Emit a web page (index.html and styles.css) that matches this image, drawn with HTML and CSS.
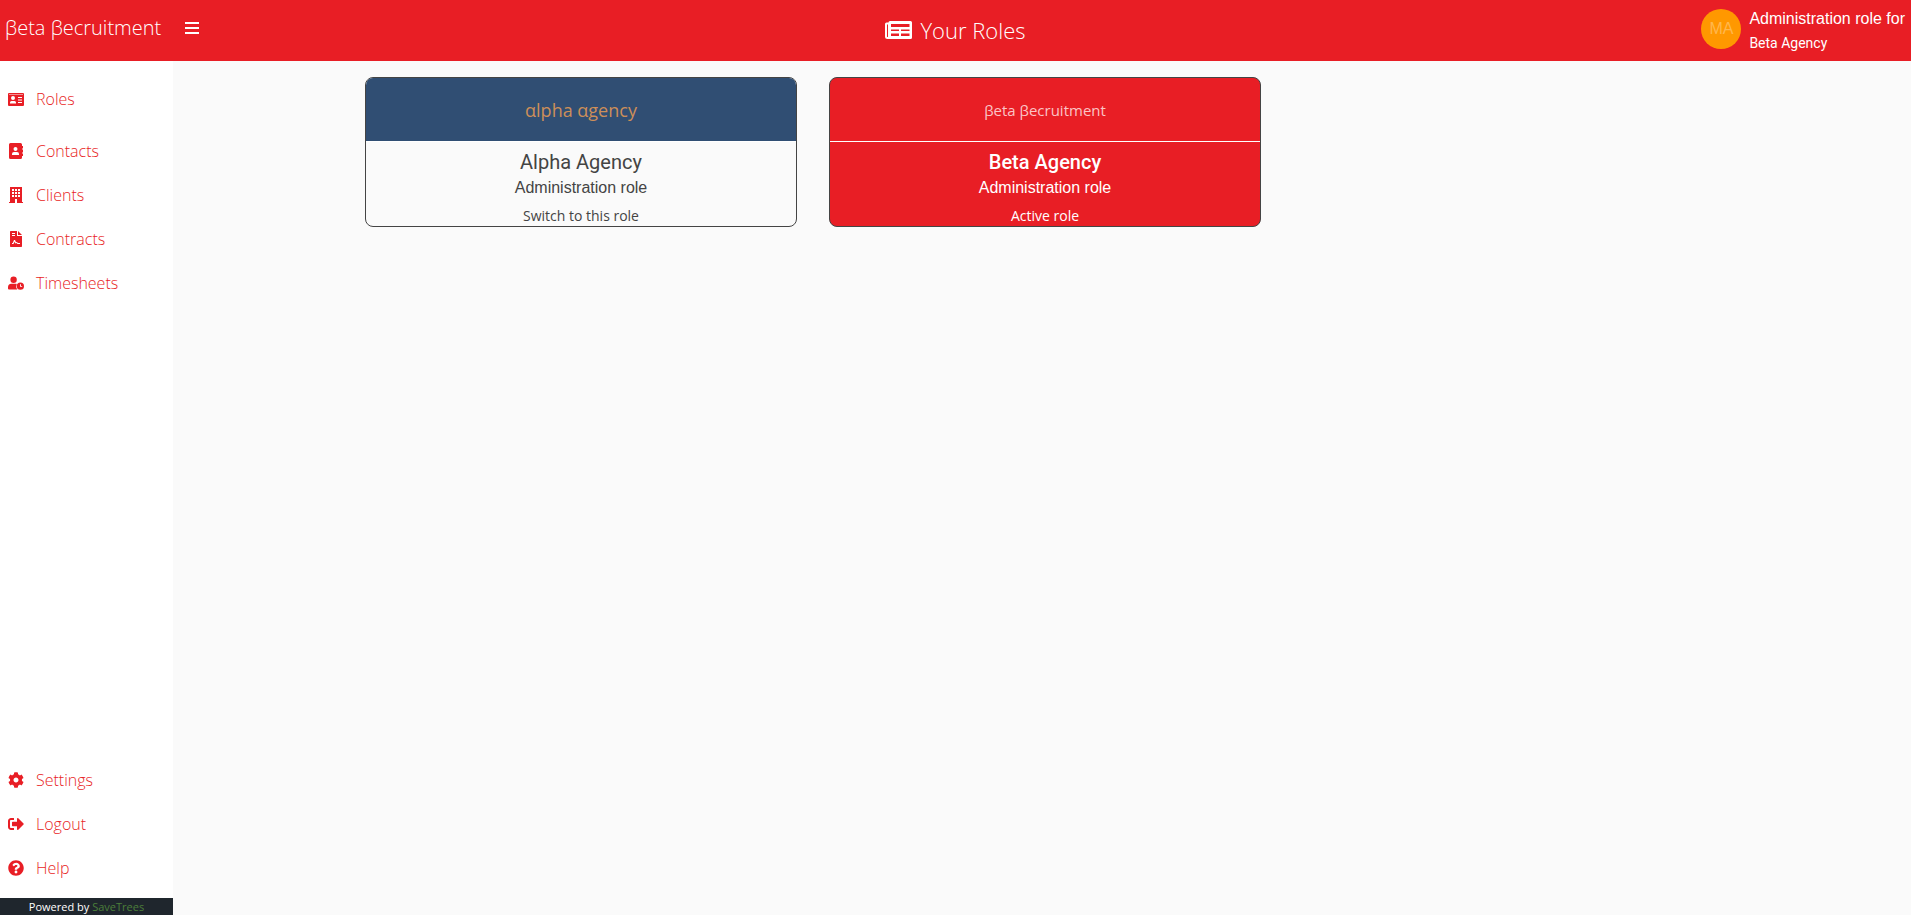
FILE: index.html
```html
<!DOCTYPE html>
<html lang="en">
<head>
    <meta charset="UTF-8">
    <meta name="viewport" content="width=device-width, initial-scale=1.0">
    <title>Your Roles</title>
    <link rel="stylesheet" href="styles.css">
</head>
<body>
    <header class="topbar">
        <div class="topbar-left">
            <a href="#" class="brand">βeta βecruitment</a>
            <button type="button" class="menu-toggle" aria-label="Toggle menu">
                <svg viewBox="0 0 14 14" width="14" height="14" fill="currentColor"><path d="M0 1h14v2H0zM0 6h14v2H0zM0 11h14v2H0z"/></svg>
            </button>
        </div>
        <h1 class="page-title">
            <svg viewBox="0 0 27 18" width="27" height="18" fill="currentColor" fill-rule="evenodd"><path d="M5 0H25.500Q27 0 27 1.500V16.500Q27 18 25.500 18H2.500Q0 18 0 15.500V3Q0 1.500 1.500 1.500H3.500Q3.500 0 5 0zM6 3V6H24.500V3zM6 8.500V10H14V8.500zM16 8.500V10H24.500V8.500zM6 12.500V15H14V12.500zM16 12.500V15H24.500V12.500zM2 3.500V15.500Q2 16 2.500 16Q3 16 3 15.500V3.500z"/></svg>
            <span>Your Roles</span>
        </h1>
        <div class="user">
            <span class="avatar">MA</span>
            <div class="user-info">
                <div class="user-role">Administration role for</div>
                <div class="user-agency">Beta Agency</div>
            </div>
        </div>
    </header>

    <div class="layout">
        <aside class="sidebar">
            <!-- Main menu -->
            <nav class="nav">
                <a href="#" class="nav-link nav-first">
                    <svg class="icon" viewBox="0 0 16 16"><path d="M1 2H15Q16 2 16 3V14Q16 15 15 15H1Q0 15 0 14V3Q0 2 1 2zM5 5A2 2 0 1 0 5 9A2 2 0 1 0 5 5zM2 12.500H8V11.500Q8 10 6.500 10H3.500Q2 10 2 11.500zM10 6V7H14V6zM10 8.500V9.500H14V8.500zM10 11V12H14V11zM1 3V3.600H15V3z"/></svg>
                    <span>Roles</span>
                </a>
                <a href="#" class="nav-link">
                    <svg class="icon" viewBox="0 0 16 16"><path d="M2.500 0H12.500Q14 0 14 1.500V3H15V5.500H14V6.500H15V9.500H14V10.500H15V13H14V14.500Q14 16 12.500 16H2.500Q1 16 1 14.500V1.500Q1 0 2.500 0zM7.500 4A2 2 0 1 0 7.500 8A2 2 0 1 0 7.500 4zM4 12H11V11Q11 9 9 9H6Q4 9 4 11z"/></svg>
                    <span>Contacts</span>
                </a>
                <a href="#" class="nav-link">
                    <svg class="icon" viewBox="0 0 16 16"><path d="M2 0H14V15H15V16H9V12H7V16H1V15H2zM4 2V4H6V2zM7 2V4H9V2zM10 2V4H12V2zM4 5V7H6V5zM7 5V7H9V5zM10 5V7H12V5zM4 8V10H6V8zM7 8V10H9V8zM10 8V10H12V8z"/></svg>
                    <span>Clients</span>
                </a>
                <a href="#" class="nav-link">
                    <svg class="icon" viewBox="0 0 16 16"><path d="M2.700 0H9V5H14V15.300Q14 16 13.300 16H2.700Q2 16 2 15.300V.7Q2 0 2.700 0zM4 2V3H7V2zM4 4V5H7V4zM4 13H5.500L6.500 10.800L7.500 12.500L8.500 12L9.500 13H12V12H10L8.800 11L8 11.300L7 9H6L4.800 12H4z"/><path d="M10 0L14 4H10z"/></svg>
                    <span>Contracts</span>
                </a>
                <a href="#" class="nav-link">
                    <svg class="icon" viewBox="0 0 16 16"><path d="M5.600 1.500A3.200 3.200 0 1 1 5.600 7.900A3.200 3.200 0 1 1 5.600 1.500z"/><path d="M3.400 8.700H8.200Q9 8.700 8.700 9.400Q7.200 12 9.200 14.500H1Q0 14.500 0 13.500V12.200Q0 8.700 3.400 8.700z"/><path d="M12.400 7.600A3.600 3.600 0 1 1 12.400 14.800A3.600 3.600 0 1 1 12.400 7.600zM12 9.200V11.700H14.200V10.900H12.900V9.200z"/></svg>
                    <span>Timesheets</span>
                </a>
            </nav>

            <!-- Account menu -->
            <nav class="nav nav-bottom">
                <a href="#" class="nav-link">
                    <svg class="icon" viewBox="0 0 512 512"><path d="M487.400 315.700l-42.600-24.600c4.300-23.200 4.300-47 0-70.200l42.600-24.600c4.900-2.800 7.100-8.600 5.500-14-11.100-35.600-30-67.800-54.700-94.600-3.800-4.100-10-5.100-14.800-2.300L380.800 110c-17.900-15.400-38.500-27.300-60.800-35.100V25.800c0-5.600-3.900-10.500-9.400-11.700-36.700-8.200-74.300-7.800-109.200 0-5.500 1.200-9.400 6.100-9.400 11.700V75c-22.200 7.900-42.800 19.800-60.800 35.100L88.700 85.500c-4.900-2.800-11-1.900-14.800 2.300-24.700 26.700-43.600 58.900-54.700 94.600-1.700 5.400.6 11.200 5.500 14L67.300 221c-4.300 23.200-4.300 47 0 70.200l-42.600 24.600c-4.900 2.800-7.100 8.600-5.500 14 11.100 35.600 30 67.800 54.700 94.600 3.800 4.100 10 5.100 14.800 2.300l42.600-24.600c17.900 15.400 38.500 27.300 60.800 35.100v49.200c0 5.600 3.900 10.500 9.400 11.700 36.700 8.200 74.300 7.800 109.200 0 5.500-1.200 9.400-6.100 9.400-11.700v-49.200c22.200-7.900 42.800-19.800 60.800-35.100l42.600 24.600c4.900 2.800 11 1.900 14.800-2.300 24.700-26.700 43.600-58.900 54.700-94.600 1.500-5.500-.7-11.300-5.600-14.100zM256 336c-44.100 0-80-35.900-80-80s35.900-80 80-80 80 35.900 80 80-35.900 80-80 80z"/></svg>
                    <span>Settings</span>
                </a>
                <a href="#" class="nav-link">
                    <svg class="icon" viewBox="0 0 512 512"><path d="M497 273L329 441c-15 15-41 4.500-41-17v-96H152c-13.300 0-24-10.700-24-24v-96c0-13.300 10.700-24 24-24h136V88c0-21.400 25.900-32 41-17l168 168c9.300 9.400 9.300 24.600 0 34zM192 436v-40c0-6.600-5.400-12-12-12H96c-17.700 0-32-14.300-32-32V160c0-17.700 14.300-32 32-32h84c6.600 0 12-5.400 12-12V76c0-6.600-5.400-12-12-12H96c-53 0-96 43-96 96v192c0 53 43 96 96 96h84c6.600 0 12-5.400 12-12z"/></svg>
                    <span>Logout</span>
                </a>
                <a href="#" class="nav-link">
                    <svg class="icon" viewBox="0 0 512 512"><path d="M504 256c0 137-111 248-248 248S8 393 8 256C8 119 119 8 256 8s248 111 248 248zM262.700 90c-54.500 0-89.300 23-116.600 63.800-3.500 5.300-2.300 12.400 2.700 16.200l34.700 26.300c5.200 4 12.600 3 16.700-2.100 17.900-22.700 30.100-35.800 57.300-35.800 20.400 0 45.700 13.100 45.700 33 0 15-12.400 22.700-32.500 34C247.100 238.500 216 254.900 216 296v4c0 6.600 5.400 12 12 12h56c6.600 0 12-5.400 12-12v-1.300c0-28.500 83.200-29.700 83.200-106.700 0-58-60.200-102-116.500-102zM256 338c-25.400 0-46 20.600-46 46s20.600 46 46 46 46-20.600 46-46-20.600-46-46-46z"/></svg>
                    <span>Help</span>
                </a>
            </nav>
            <div class="powered">Powered by <a href="#">SaveTrees</a></div>
        </aside>

        <main class="roles">
            <section class="role-card">
                <div class="role-logo logo-alpha">αlpha αgency</div>
                <div class="role-body">
                    <h2>Alpha Agency</h2>
                    <p>Administration role</p>
                    <button type="button" class="role-action">Switch to this role</button>
                </div>
            </section>
            <section class="role-card active">
                <div class="role-logo logo-beta">βeta βecruitment</div>
                <div class="role-body">
                    <h2>Beta Agency</h2>
                    <p>Administration role</p>
                    <div class="role-action">Active role</div>
                </div>
            </section>
        </main>
    </div>
</body>
</html>
```
FILE: styles.css
```css
* {
    box-sizing: border-box;
}
body {
    margin: 0;
    min-height: 100vh;
    display: flex;
    flex-direction: column;
    font-family: "Open Sans", "Noto Sans", sans-serif;
    color: #444;
    background: #fafafa;
}
a {
    text-decoration: none;
}
h1, h2, p {
    margin: 0;
}
button {
    border: none;
    background: none;
    padding: 0;
    color: inherit;
    font-family: inherit;
    cursor: pointer;
}
.topbar {
    height: 61px;
    display: grid;
    grid-template-columns: 1fr auto 1fr;
    align-items: center;
    background: #e81e25;
    color: #fff;
}
.topbar-left {
    display: flex;
    align-items: center;
    gap: 20px;
    padding: 0 0 6px 5px;
}
.brand {
    width: 160px;
    color: #fff;
    font-size: 20px;
    font-weight: 300;
    line-height: 28px;
    white-space: nowrap;
}
.menu-toggle {
    display: flex;
}
.page-title {
    display: flex;
    align-items: center;
    gap: 8px;
    padding-bottom: 2px;
    font-size: 22px;
    font-weight: 300;
    line-height: 28px;
}
.user {
    display: flex;
    justify-content: flex-end;
    align-items: center;
    gap: 8px;
    padding: 0 6px 4px 0;
}
.avatar {
    width: 40px;
    height: 40px;
    border-radius: 50%;
    background: #ff9800;
    color: #ffb74d;
    font-family: "Liberation Sans", sans-serif;
    font-size: 16px;
    line-height: 40px;
    text-align: center;
}
.user-info {
    padding-top: 4px;
}
.user-role {
    font-family: "Liberation Sans", sans-serif;
    font-size: 16px;
    line-height: 24px;
}
.user-agency {
    font-family: Roboto, sans-serif;
    font-size: 14px;
    line-height: 24px;
}
.layout {
    flex: 1;
    display: flex;
}
.sidebar {
    width: 173px;
    display: flex;
    flex-direction: column;
    background: #fff;
}
.nav {
    padding-top: 16px;
}
.nav-bottom {
    margin-top: auto;
    padding-bottom: 8px;
}
.nav-link {
    display: flex;
    align-items: center;
    gap: 12px;
    height: 44px;
    padding-left: 8px;
    color: #e81e25;
    font-size: 16px;
    font-weight: 300;
}
.nav-first {
    margin-bottom: 8px;
}
.icon {
    width: 16px;
    height: 16px;
    fill: currentColor;
    fill-rule: evenodd;
}
.powered {
    background: #1f262d;
    color: #fff;
    font-size: 11px;
    line-height: 17px;
    text-align: center;
}
.powered a {
    color: #4b7f3a;
}
.roles {
    flex: 1;
    display: grid;
    grid-template-columns: repeat(3, 1fr);
    gap: 32px;
    align-items: start;
    padding: 16px 186px 16px 192px;
}
.role-card {
    border: 1px solid #444;
    border-radius: 8px;
    overflow: hidden;
    text-align: center;
}
.role-logo {
    display: flex;
    justify-content: center;
    align-items: center;
    height: 64px;
    border-bottom: 1px solid #fff;
}
.logo-alpha {
    background: #304e73;
    color: #cd8f59;
    font-size: 18px;
    font-weight: 500;
}
.logo-beta {
    color: #fbc4c6;
    font-size: 15px;
}
.role-body {
    padding-top: 7px;
}
.role-body h2 {
    font-family: Roboto, sans-serif;
    font-size: 20px;
    font-weight: 400;
    line-height: 26px;
}
.role-body p {
    font-family: "Liberation Sans", sans-serif;
    font-size: 16px;
    line-height: 26px;
}
.role-action {
    display: block;
    width: 100%;
    padding-top: 5px;
    font-size: 14px;
    line-height: 20px;
}
.active {
    background: #e81e25;
    color: #fff;
}
.active h2 {
    font-weight: 500;
}
```
